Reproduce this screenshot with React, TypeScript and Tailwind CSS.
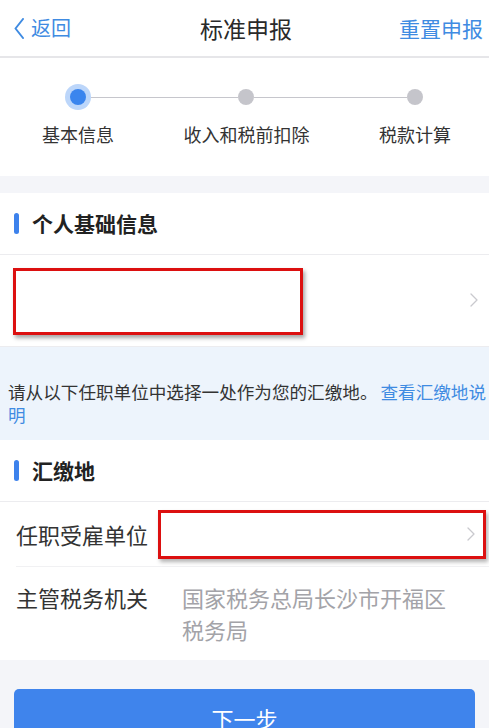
import React from 'react';

const Chevron: React.FC<{ className?: string }> = ({ className }) => (
  <svg width="8" height="14" viewBox="0 0 8 14" className={className} fill="none">
    <path d="M1 1l6 6-6 6" stroke="#c9c9ce" strokeWidth="1.3" strokeLinecap="round" strokeLinejoin="round" />
  </svg>
);

const SectionTitle: React.FC<{ title: string }> = ({ title }) => (
  <div className="h-[62px] flex items-center border-b border-[#ececef]">
    <div className="ml-[14px] w-[5px] h-[21px] rounded-full bg-[#3d82ec]" />
    <div className="ml-[13px] text-[21px] font-bold text-[#222]">{title}</div>
  </div>
);

export default function App() {
  const steps = ['基本信息', '收入和税前扣除', '税款计算'];
  return (
    <div
      className="w-[489px] h-[728px] overflow-hidden bg-[#f4f5f9]"
      style={{ fontFamily: '"Noto Sans CJK SC", "Noto Sans", sans-serif' }}
    >
      {/* header */}
      <div className="h-[58px] bg-white border-b-2 border-[#e6e6e9] flex items-center justify-between">
        <div className="flex items-center pl-[14px] text-[#3f8be2]">
          <svg width="10" height="21" viewBox="0 0 10 21" fill="none">
            <path d="M9 1L1.5 10.5 9 20" stroke="#3f8be2" strokeWidth="2" strokeLinejoin="round" strokeLinecap="round" />
          </svg>
          <span className="ml-[7px] text-[20px] leading-none">返回</span>
        </div>
        <div className="text-[23px] text-[#2a2a2a] leading-none ml-[22px]">标准申报</div>
        <div className="pr-[6px] text-[21px] text-[#3f8be2] leading-none">重置申报</div>
      </div>

      {/* steps */}
      <div className="bg-white pt-[26px] pb-[30px]">
        <div className="flex items-center pl-[65px] pr-[66px]">
          <div className="w-[26px] h-[26px] rounded-full bg-[#bcd6fa] flex items-center justify-center">
            <div className="w-[16px] h-[16px] rounded-full bg-[#3a85ee]" />
          </div>
          <div className="w-[147px] h-px bg-[#c6c6cc]" />
          <div className="w-[16px] h-[16px] rounded-full bg-[#c5c5cb]" />
          <div className="flex-1 h-px bg-[#c6c6cc]" />
          <div className="w-[16px] h-[16px] rounded-full bg-[#c5c5cb]" />
        </div>
        <div className="flex justify-between pl-[8px] pr-[4px] mt-[12px]">
          {steps.map((s) => (
            <div key={s} className="w-[140px] text-center text-[18px] leading-[24px] text-[#333]">
              {s}
            </div>
          ))}
        </div>
      </div>

      <div className="h-[17px]" />

      {/* 个人基础信息 */}
      <div className="bg-white">
        <SectionTitle title="个人基础信息" />
        <div className="h-[92px] flex items-start justify-between border-b border-[#ececef]">
          <div className="ml-[13px] mt-[13px] w-[290px] h-[67px] border-[3px] border-[#dc1010] shadow-[2px_3px_4px_rgba(0,0,0,0.35)] bg-white" />
          <Chevron className="mt-[38px] mr-[11px]" />
        </div>
      </div>

      {/* info */}
      <div className="bg-[#edf4fc] pl-[8px] pt-[33px] pb-[14px] text-[17.6px] leading-[23px] text-[#333]">
        请从以下任职单位中选择一处作为您的汇缴地。<span className="ml-[3px] text-[#3f8be2]">查看汇缴地说明</span>
      </div>

      {/* 汇缴地 */}
      <div className="bg-white">
        <SectionTitle title="汇缴地" />
        <div className="h-[64px] flex items-center">
          <div className="w-[158px] pl-[16px] text-[22px] text-[#333] leading-none">任职受雇单位</div>
          <div className="w-[328px] h-[49px] border-[3px] border-[#dc1010] shadow-[2px_3px_4px_rgba(0,0,0,0.3)] bg-white flex items-center justify-end pr-[8px]">
            <Chevron />
          </div>
        </div>
        <div className="ml-[16px] border-t border-[#f1f1f3]" />
        <div className="flex pt-[14px] pb-[14px] h-[93px]">
          <div className="w-[182px] pl-[16px] text-[22px] leading-[32px] text-[#333]">主管税务机关</div>
          <div className="w-[282px] text-[22px] leading-[32px] text-[#a3a3a8]">国家税务总局长沙市开福区税务局</div>
        </div>
      </div>

      {/* button */}
      <div className="px-[14px] pt-[29px]">
        <button className="w-full h-[58px] rounded-[5px] bg-[#3f84ec] text-white text-[22px]">下一步</button>
      </div>
    </div>
  );
}
